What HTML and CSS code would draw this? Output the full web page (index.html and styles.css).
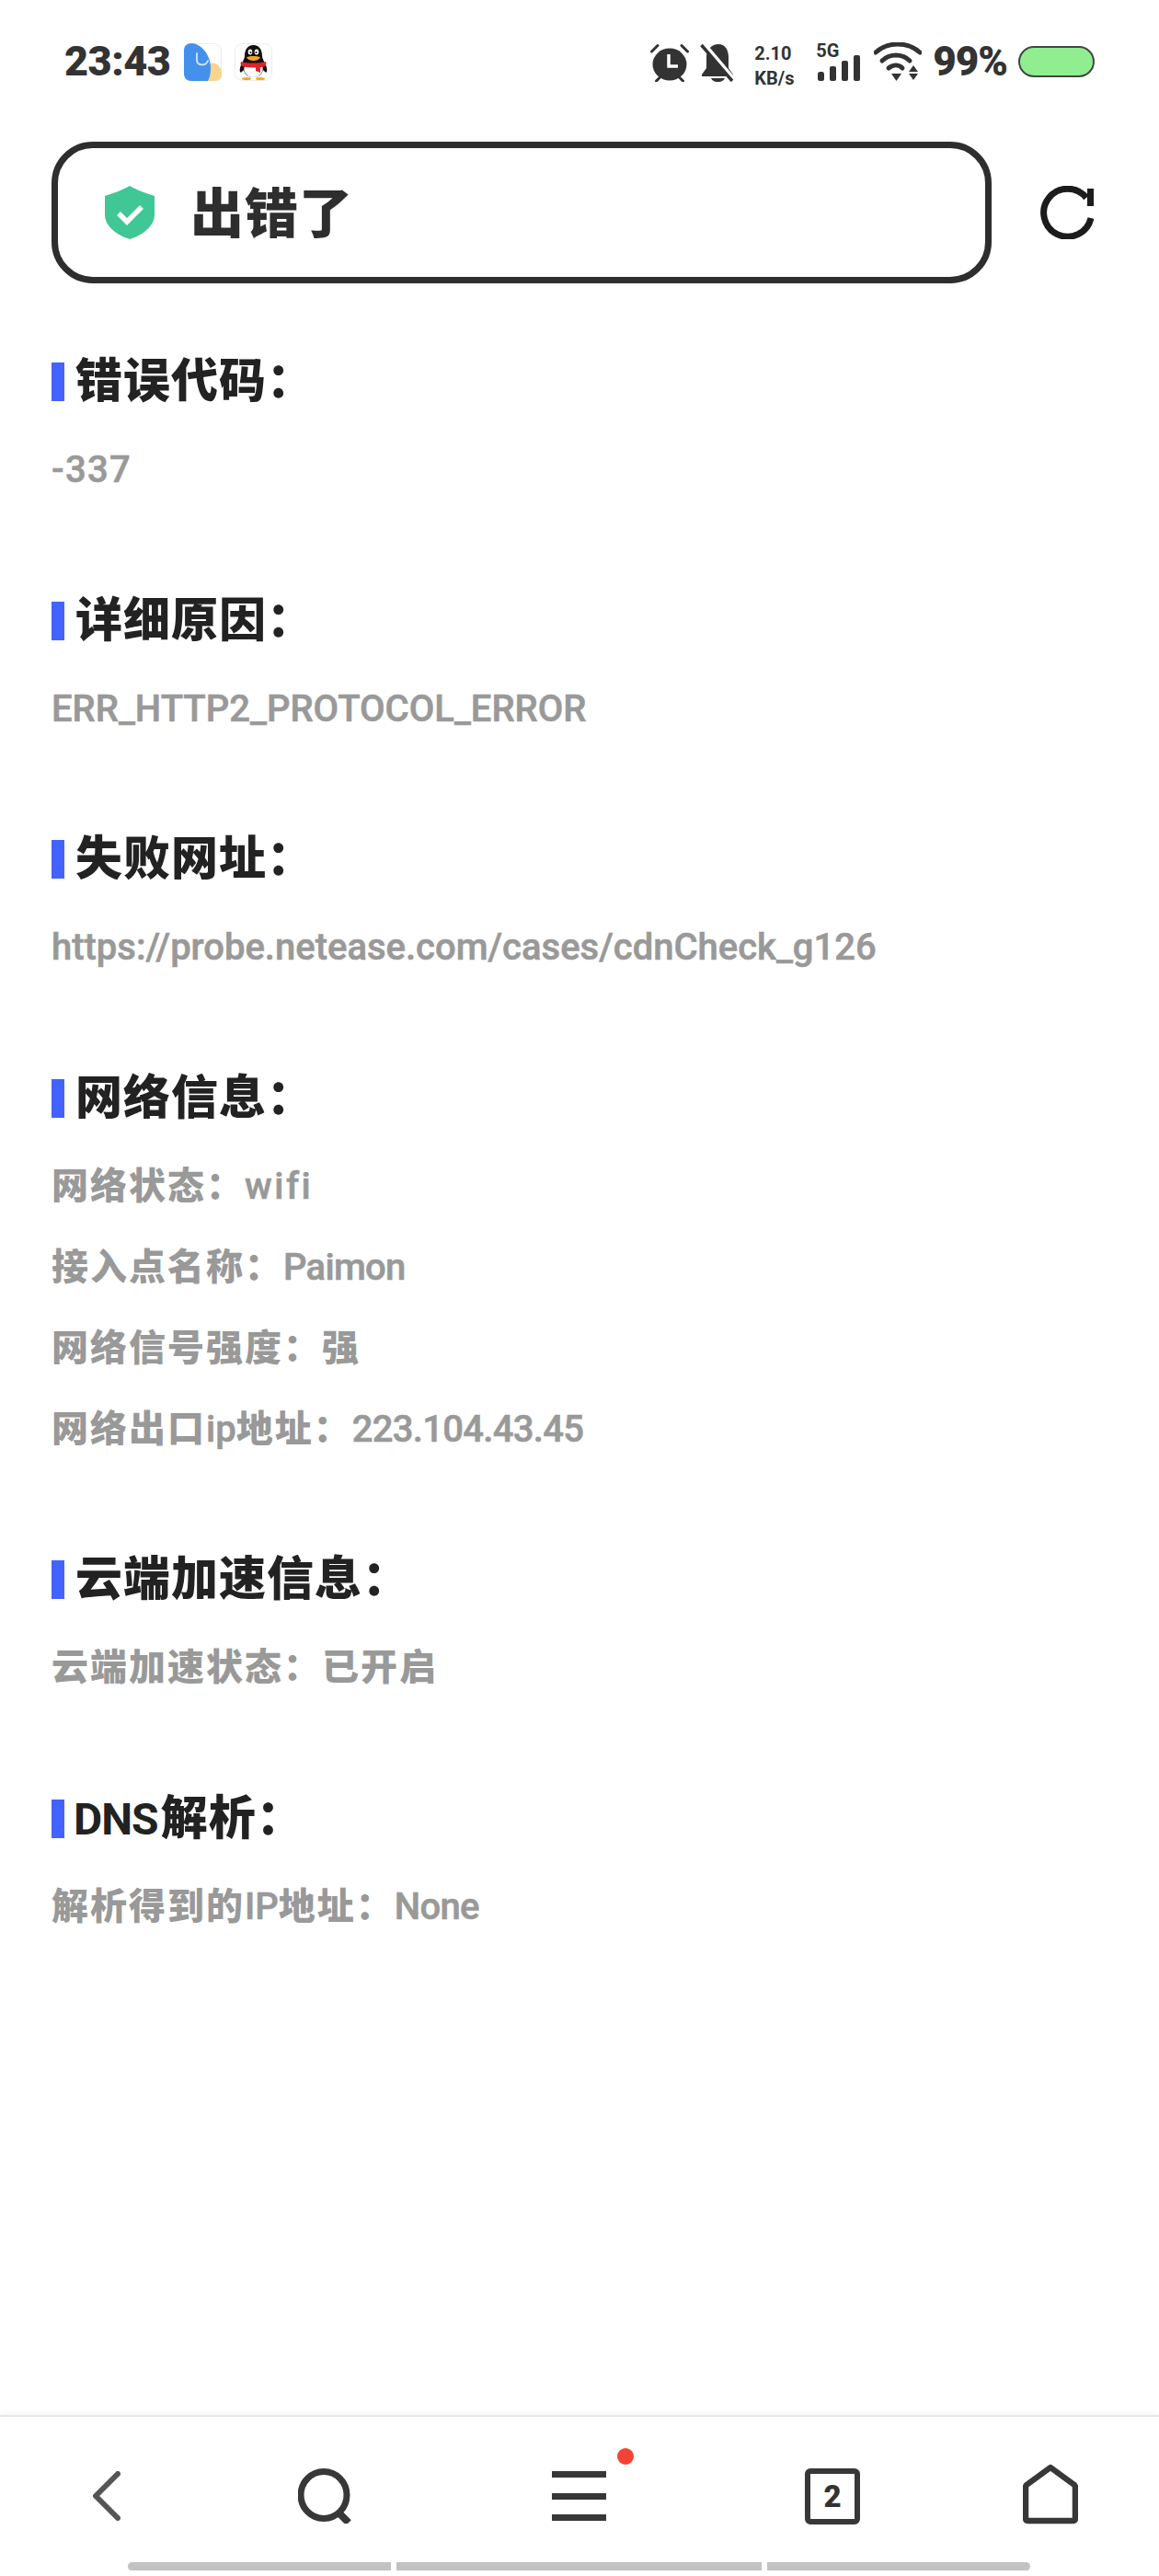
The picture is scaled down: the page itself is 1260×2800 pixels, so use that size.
FILE: index.html
```html
<!DOCTYPE html>
<html lang="zh-CN">
<head>
    <meta charset="UTF-8">
    <meta name="viewport" content="width=device-width, initial-scale=1.0">
    <title>出错了</title>
    <link rel="stylesheet" href="styles.css">
</head>
<body>
<div class="page">
    <div class="status-bar">
        <span class="time">23:43</span>
        <svg class="app-icon first" viewBox="0 0 41 41">
            <rect x="0.5" y="0.5" width="40" height="40" rx="8" fill="#fff" stroke="#ececec"/>
            <path d="M28 22c7-2 12 3 13 10v2c0 4-3 7-7 7H24z" fill="#f8d58c"/>
            <path d="M0 8C0 3 3 0 8 0c9 0 21 11 21 27 0 6-1 10-3 14H8c-5 0-8-3-8-8z" fill="#4391ec"/>
            <path d="M14 11v7c0 7 10 7 12 1" fill="none" stroke="#d6e8fb" stroke-width="1.800" stroke-linecap="round"/>
        </svg>
        <svg class="app-icon" viewBox="0 0 41 41">
            <rect x="0.5" y="0.5" width="40" height="40" rx="8" fill="#fff" stroke="#ececec"/>
            <ellipse cx="13" cy="38.500" rx="5" ry="1.500" fill="#f5a623"/>
            <ellipse cx="28" cy="38.500" rx="5" ry="1.500" fill="#f5a623"/>
            <path d="M20.500 2c7 0 9.500 6 9.500 12 0 2 1 3 2 6 2 3 4 8 3 11-1 2-3-1-4-2-1 5-5 8-10.500 8S11 34 10 29c-1 1-3 4-4 2-1-3 1-8 3-11 1-3 2-4 2-6 0-6 2.500-12 9.500-12z" fill="#111"/>
            <path d="M12 23c2-1 15-1 17 0 2 3 2 6 1 8-2 4-5 6-9.500 6S13 35 11 31c-1-2-1-5 1-8z" fill="#fff"/>
            <ellipse cx="17" cy="9.500" rx="2.300" ry="3" fill="#fff"/>
            <ellipse cx="24" cy="9.500" rx="2.300" ry="3" fill="#fff"/>
            <circle cx="17.500" cy="10" r="1" fill="#111"/>
            <circle cx="23.500" cy="10" r="1" fill="#111"/>
            <path d="M13 15c4-1.500 11-1.500 15 0-1 3-5 4-7.500 4S14 18 13 15z" fill="#f5a623"/>
            <path d="M7 20c8 2 19 2 27 0 1 2 0 4-1 5-1 .5-3 1-5 1.200V32l-5-2v-3.500c-6 0-11-.5-15-1.500-1-1-2-3-1-5z" fill="#e0222a"/>
        </svg>
        <div class="status-right">
            <svg class="ic-alarm" viewBox="0 0 42 42">
                <path d="M1.500 9 8 2.500M40.500 9 34 2.500M6.500 41l4-4M35.500 41l-4-4" stroke="#333" stroke-width="3" stroke-linecap="round"/>
                <ellipse cx="21" cy="23" rx="18.500" ry="17.500" fill="#333"/>
                <path d="M20 12v13h10" fill="none" stroke="#fff" stroke-width="3.500"/>
            </svg>
            <svg class="ic-bell" viewBox="0 0 38 42">
                <path d="M20 1c7 0 11 6 11 14v12l5 7v2H2v-2l5-7V15C7 7 13 1 20 1z" fill="#333"/>
                <path d="M12 38h15c-1 2-3 4-7.500 4S13 40 12 38z" fill="#333"/>
                <path d="M4 0 38 40" stroke="#fff" stroke-width="4"/>
                <path d="M1.500 2 35 41" stroke="#333" stroke-width="3.500"/>
            </svg>
            <div class="speed"><span>2.10</span><span>KB/s</span></div>
            <div class="signal">
                <span class="net">5G</span>
                <svg class="ic-bars" viewBox="0 0 47 28">
                    <rect x="0" y="18" width="7" height="10" rx="2.500" fill="#333"/>
                    <rect x="13" y="12" width="7" height="16" rx="2" fill="#333"/>
                    <rect x="26" y="6" width="7" height="22" rx="2" fill="#333"/>
                    <rect x="39" y="0" width="7" height="28" rx="2" fill="#333"/>
                </svg>
            </div>
            <svg class="ic-wifi" viewBox="0 0 52 42">
                <path d="M2 11C15-1 37-1 50 11" fill="none" stroke="#333" stroke-width="5" stroke-linecap="round"/>
                <path d="M9 20C17 12 31 12 39 20" fill="none" stroke="#333" stroke-width="5" stroke-linecap="round"/>
                <path d="M16 28c5-4 11-4 15 0" fill="none" stroke="#333" stroke-width="5" stroke-linecap="round"/>
                <path d="M19 34h11l-5.500 8zM43 25l5 7H38zM38 34h10l-5 7z" fill="#333"/>
            </svg>
            <span class="battery-text">99%</span>
            <div class="battery"></div>
        </div>
    </div>

    <div class="title-row">
        <div class="title-box">
            <svg class="ic-shield" viewBox="0 0 54 58">
                <path d="M27 0c7 4 17 8 27 11v21c0 11-13 22-27 26C13 54 0 43 0 32V11C10 8 20 4 27 0z" fill="#3fc795"/>
                <path d="M15 30l9 9 16-16" fill="none" stroke="#fff" stroke-width="5.500"/>
            </svg>
            <span class="title">出错了</span>
        </div>
        <svg class="ic-refresh" viewBox="0 0 58 58">
            <path d="M55 35A26 26 0 1 1 50 13" fill="none" stroke="#1c1c1c" stroke-width="7"/>
            <path d="M51 3h7v19h-7z" fill="#1c1c1c"/>
        </svg>
    </div>

    <div class="content">
        <section class="info">
            <h2>错误代码：</h2>
            <p><span class="v code">-337</span></p>
        </section>
        <section class="info">
            <h2>详细原因：</h2>
            <p><span class="v">ERR_HTTP2_PROTOCOL_ERROR</span></p>
        </section>
        <section class="info">
            <h2>失败网址：</h2>
            <p><span class="v">https://probe.netease.com/cases/cdnCheck_g126</span></p>
        </section>
        <section class="info">
            <h2>网络信息：</h2>
            <p>网络状态：<span class="v wide">wifi</span></p>
            <p>接入点名称：<span class="v tight">Paimon</span></p>
            <p>网络信号强度：强</p>
            <p>网络出口<span class="v">ip</span>地址：<span class="v tight">223.104.43.45</span></p>
        </section>
        <section class="info">
            <h2>云端加速信息：</h2>
            <p>云端加速状态：已开启</p>
        </section>
        <section class="info">
            <h2><span class="dns">DNS</span>解析：</h2>
            <p>解析得到的<span class="v">IP</span>地址：<span class="v tight">None</span></p>
        </section>
    </div>

    <div class="bottom-nav">
        <svg class="nav-icon back" viewBox="0 0 31 54">
            <path d="M28 3 4 27l24 24" fill="none" stroke="#555" stroke-width="6" stroke-linecap="round" stroke-linejoin="round"/>
        </svg>
        <svg class="nav-icon" viewBox="0 0 60 60">
            <ellipse cx="28" cy="29" rx="25" ry="25.500" fill="none" stroke="#383838" stroke-width="7"/>
            <path d="M44 48l11 11" stroke="#383838" stroke-width="8"/>
        </svg>
        <div class="menu">
            <span></span><span></span><span></span>
            <i class="dot"></i>
        </div>
        <div class="tabs-icon">2</div>
        <svg class="nav-icon home" viewBox="0 0 60 66">
            <path d="M30 4 56 23c1 1 1 2 1 3v33c0 2-1 3-3 3H6c-2 0-3-1-3-3V26c0-1 0-2 1-3z" fill="none" stroke="#383838" stroke-width="6.500" stroke-linejoin="round"/>
        </svg>
    </div>
    <div class="scroll-track">
        <span class="seg left"></span>
        <span class="seg middle"></span>
        <span class="seg right"></span>
    </div>
</div>
</body>
</html>
```

FILE: styles.css
```css
*{
    margin: 0;
    padding: 0;
    box-sizing: border-box;
}

body{
    background-color: #fff;
    font-family: "Roboto", "Noto Sans CJK SC", sans-serif;
    color: #222;
}

.page{
    height: 2800px;
    display: flex;
    flex-direction: column;
}

/* status bar */
.status-bar{
    height: 154px;
    padding: 45px 70px 0 70px;
    display: flex;
    align-items: flex-start;
}
.time{
    font-size: 45px;
    font-weight: 900;
    line-height: 44px;
    letter-spacing: -0.500px;
    width: 130px;
    color: #333;
}
.app-icon{
    width: 41px;
    height: 41px;
    margin-top: 2px;
    margin-left: 14px;
}
.app-icon.first{
    margin-left: 0;
}
.status-right{
    margin-left: auto;
    display: flex;
    align-items: flex-start;
    color: #333;
}
.ic-alarm{
    width: 42px;
    height: 42px;
    margin-top: 2px;
}
.ic-bell{
    width: 38px;
    height: 42px;
    margin-top: 2px;
    margin-left: 12px;
}
.speed{
    display: flex;
    flex-direction: column;
    margin-left: 21px;
    width: 46px;
    font-size: 20px;
    font-weight: 700;
    line-height: 27px;
}
.signal{
    width: 47px;
    height: 44px;
    margin-left: 23px;
}
.net{
    display: block;
    font-size: 20px;
    font-weight: 700;
    line-height: 20px;
    margin-left: -2px;
}
.ic-bars{
    display: block;
    width: 47px;
    height: 28px;
    margin-top: -5px;
}
.ic-wifi{
    width: 52px;
    height: 42px;
    margin-left: 14px;
    margin-top: 1px;
}
.battery-text{
    font-size: 44px;
    font-weight: 900;
    line-height: 44px;
    margin-left: 12px;
    letter-spacing: -1px;
}
.battery{
    width: 83px;
    height: 34px;
    margin-left: 12px;
    margin-top: 5px;
    background-color: #90ee90;
    border: 2px solid #444;
    border-radius: 17px;
}

/* title */
.title-row{
    display: flex;
    align-items: center;
    padding-left: 56px;
    height: 154px;
}
.title-box{
    width: 1022px;
    height: 154px;
    border: 7px solid #2e2e2e;
    border-radius: 45px;
    display: flex;
    align-items: center;
    padding-left: 51px;
}
.ic-shield{
    width: 54px;
    height: 58px;
}
.title{
    font-size: 58px;
    font-weight: 900;
    margin-left: 39px;
    margin-bottom: 7px;
    letter-spacing: 1px;
    color: #2e2e2e;
    font-family: "Noto Sans CJK SC", sans-serif;
}
.ic-refresh{
    width: 58px;
    height: 58px;
    margin-left: 53px;
}

/* sections */
.content{
    flex: 1;
    padding: 86px 0 0 56px;
}
.info{
    margin-bottom: 98.500px;
}
.info h2{
    height: 42px;
    line-height: 42px;
    font-size: 51px;
    font-weight: 900;
    letter-spacing: 1px;
    border-left: 14px solid #4263ff;
    padding-left: 12px;
    margin-bottom: 31px;
    color: #222;
}
.dns{
    font-size: 48px;
    font-weight: 700;
    letter-spacing: -1px;
    margin-left: -2px;
    margin-right: 3px;
}
.info p{
    font-size: 40px;
    font-weight: 900;
    letter-spacing: 2px;
    line-height: 88px;
    color: #999;
    white-space: nowrap;
}
.v{
    font-weight: 500;
    letter-spacing: 0;
    -webkit-text-stroke: 0.6px #999;
}
.v.tight{
    letter-spacing: -0.700px;
}
.v.wide{
    letter-spacing: 2.500px;
}
.v.code{
    letter-spacing: 1.300px;
}

/* bottom bar */
.bottom-nav{
    height: 160px;
    border-top: 2px solid #e8e8e8;
    box-shadow: 0 -3px 6px rgba(0, 0, 0, 0.03);
    padding-left: 85px;
    display: grid;
    grid-template-columns: 239px 276px 275px 237px 60px;
    align-items: start;
    justify-items: start;
    padding-top: 56px;
}
.nav-icon{
    width: 60px;
    height: 60px;
}
.nav-icon.back{
    width: 31px;
    height: 54px;
    margin-left: 15px;
    margin-top: 3px;
}
.nav-icon.home{
    height: 66px;
    margin-top: -5px;
}
.menu{
    position: relative;
    width: 59px;
    height: 54px;
    margin-top: 3px;
    display: flex;
    flex-direction: column;
    justify-content: space-between;
}
.menu span{
    height: 7px;
    background-color: #383838;
}
.dot{
    position: absolute;
    left: 71px;
    top: -25px;
    width: 18px;
    height: 18px;
    border-radius: 50%;
    background-color: #f44336;
}
.tabs-icon{
    width: 60px;
    height: 61px;
    border: 6px solid #383838;
    border-radius: 6px;
    display: flex;
    align-items: center;
    justify-content: center;
    font-size: 33px;
    font-weight: 900;
    color: #333;
}
.scroll-track{
    height: 15px;
    padding-left: 139px;
    display: flex;
    gap: 6px;
}
.seg{
    height: 9px;
    background-color: #c2c2c2;
}
.seg.left{
    width: 286px;
    border-radius: 5px 0 0 5px;
}
.seg.middle{
    width: 397px;
}
.seg.right{
    width: 286px;
    border-radius: 0 5px 5px 0;
}
```
